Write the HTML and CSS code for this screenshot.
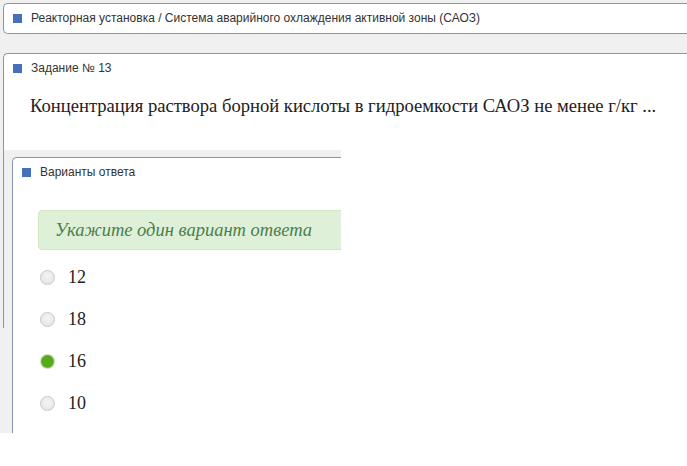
FILE: index.html
```html
<!DOCTYPE html>
<html lang="ru">
<head>
  <meta charset="UTF-8">
  <title>Задание № 13</title>
  <link rel="stylesheet" href="styles.css">
</head>
<body>

<div class="page">
  <div class="crumbs-area">
    <div class="panel crumbs">
      <div class="panel-title"><span class="mark"></span>Реакторная установка / Система аварийного охлаждения активной зоны (САОЗ)</div>
    </div>
  </div>

  <div class="panel task">
    <div class="panel-title"><span class="mark"></span>Задание № 13</div>
    <div class="question">Концентрация раствора борной кислоты в гидроемкости САОЗ не менее г/кг ...</div>

    <div class="answers-wrap">
      <div class="panel answers">
        <div class="panel-title"><span class="mark"></span>Варианты ответа</div>
        <div class="hint">Укажите один вариант ответа</div>
        <div class="options">
          <label class="option"><input type="radio" name="answer" value="12">12</label>
          <label class="option"><input type="radio" name="answer" value="18">18</label>
          <label class="option"><input type="radio" name="answer" value="16" checked>16</label>
          <label class="option"><input type="radio" name="answer" value="10">10</label>
        </div>
      </div>
    </div>
  </div>
</div>

</body>
</html>
```

FILE: styles.css
```css
body {
  margin: 0;
  background: #fff;
  font-family: 'Liberation Sans', Arial, sans-serif;
  color: #333;
  overflow: hidden;
}

.page {
  height: 433px;
  background: linear-gradient(90deg, #f0f0f0 12px, #fff 12px);
}

.crumbs-area {
  background: #f0f0f0;
  padding: 3px 0 19px 3px;
}

.panel {
  background: #fff;
  border: 1px solid #8c90b4;
  border-right: none;
  border-bottom: none;
  border-radius: 5px 0 0 0;
}

.crumbs {
  border-bottom: 1px solid #8c90b4;
  border-radius: 5px 0 0 5px;
  margin-right: -10px;
}

.panel-title {
  display: flex;
  align-items: center;
  gap: 9px;
  height: 29px;
  padding: 8px 9px 8px;
  box-sizing: border-box;
  font-size: 12px;
  line-height: 13px;
  white-space: nowrap;
}

.mark {
  width: 9px;
  height: 9px;
  background: #4670bc;
  flex: none;
}

.task {
  margin-left: 3px;
  height: 275px;
  box-sizing: border-box;
}

.question {
  padding: 12px 20px 33px 26px;
  font-family: 'Liberation Serif', 'Times New Roman', serif;
  font-size: 18.6px;
  line-height: 22px;
  color: #222;
  white-space: nowrap;
}

.answers-wrap {
  width: 337px;
  background: #f0f0f0;
  padding: 7px 0 0 8px;
  box-sizing: border-box;
}

.answers {
  height: 276px;
  box-sizing: border-box;
  overflow: hidden;
}

.hint {
  margin: 23px -10px 0 25px;
  height: 40px;
  box-sizing: border-box;
  padding-left: 16px;
  background: #dff0d8;
  border: 1px solid #d3e6c4;
  border-radius: 4px;
  font-family: 'Liberation Serif', 'Times New Roman', serif;
  font-style: italic;
  font-size: 18.5px;
  line-height: 38px;
  color: #4b7f4b;
  white-space: nowrap;
}

.options {
  margin-top: 6px;
}

.option {
  display: flex;
  align-items: center;
  gap: 13px;
  height: 42px;
  padding-left: 27px;
  font-family: 'Liberation Serif', 'Times New Roman', serif;
  font-size: 18px;
  color: #222;
}

.option input {
  appearance: none;
  margin: 0;
  width: 15px;
  height: 15px;
  border-radius: 50%;
  border: 1px solid #c8c8c8;
  background: radial-gradient(circle at 50% 40%, #f4f4f4, #e2e2e2);
  box-sizing: border-box;
}

.option input:checked {
  border-color: #bfe0ab;
  background: radial-gradient(circle, #56a81c 5.5px, #7cbf4e 6.5px);
}
```
